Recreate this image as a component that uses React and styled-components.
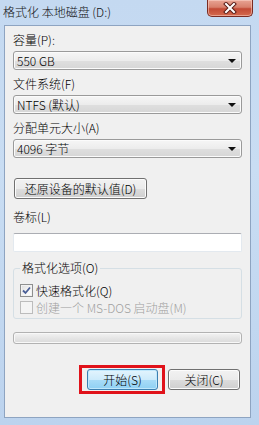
import React from 'react'
import styled, { createGlobalStyle } from 'styled-components'

const Global = createGlobalStyle`
  html, body {
    margin: 0;
    padding: 0;
    width: 259px;
    height: 425px;
    overflow: hidden;
  }
  body {
    font-family: 'Noto Sans CJK SC', 'DejaVu Sans', sans-serif;
    font-size: 12px;
    font-weight: 300;
    color: #000;
  }
`

const Window = styled.div`
  width: 259px;
  height: 425px;
  display: flex;
  flex-direction: column;
  background: linear-gradient(180deg, #c4d9f1 0%, #c9ddf3 40%, #bcd3ee 100%);
  box-sizing: border-box;
`

const TitleBar = styled.div`
  height: 25px;
  flex: none;
  display: flex;
  justify-content: space-between;
  align-items: flex-start;
  padding-left: 3px;
`

const Title = styled.div`
  line-height: 24px;
  font-size: 12px;
  color: #111;
`

const CloseBtn = styled.div`
  width: 46px;
  height: 17px;
  margin-right: 6px;
  box-sizing: border-box;
  border: 1px solid #7a2b22;
  border-top: none;
  border-radius: 0 0 5px 5px;
  background: linear-gradient(180deg, #e8a494 0%, #d8806c 45%, #c24a35 55%, #d46a4e 100%);
  box-shadow: inset 0 0 0 1px rgba(255, 220, 210, 0.5);
  display: flex;
  align-items: center;
  justify-content: center;
`

const Panel = styled.div`
  flex: 1;
  margin: 0 8px 7px 4px;
  background: #f0f0f0;
  border: 1px solid #8ea4c1;
  padding: 6px 8px 0 8px;
  display: flex;
  flex-direction: column;
`

const Label = styled.div`
  line-height: 16px;
  height: 16px;
  margin-top: ${(p) => p.gap || 0}px;
  margin-bottom: ${(p) => (p.below === undefined ? 3 : p.below)}px;
`

const Combo = styled.div`
  height: 19px;
  box-sizing: border-box;
  border: 1px solid #9a9a9a;
  border-radius: 3px;
  background: linear-gradient(180deg, #f6f6f6 0%, #ececec 50%, #dfdfdf 51%, #d6d6d6 100%);
  box-shadow: inset 0 0 0 1px #fbfbfb;
  display: flex;
  align-items: center;
  justify-content: space-between;
  padding: 0 5px 0 3px;
  line-height: 17px;
`

const Arrow = styled.span`
  width: 0;
  height: 0;
  border-left: 4px solid transparent;
  border-right: 4px solid transparent;
  border-top: 4px solid #111;
`

const Button = styled.div`
  height: 21px;
  box-sizing: border-box;
  width: ${(p) => p.w || 73}px;
  border: 1px solid ${(p) => (p.primary ? '#3c7fb1' : '#707070')};
  border-radius: 3px;
  background: ${(p) =>
    p.primary
      ? 'linear-gradient(180deg, #e3f4fd 0%, #cdebfb 50%, #a9dcf8 51%, #8fd0f3 100%)'
      : 'linear-gradient(180deg, #f2f2f2 0%, #ebebeb 50%, #dddddd 51%, #cfcfcf 100%)'};
  box-shadow: inset 0 0 0 1px ${(p) => (p.primary ? '#c0e8fc' : '#fcfcfc')};
  display: flex;
  align-items: center;
  justify-content: center;
  line-height: 19px;
  margin-top: ${(p) => p.gap || 0}px;
  margin-left: ${(p) => p.left || 0}px;
`

const TextInput = styled.div`
  height: 19px;
  box-sizing: border-box;
  background: #fff;
  border: 1px solid #e3e9ef;
  border-top-color: #abadb3;
  border-radius: 2px;
`

const Group = styled.fieldset`
  margin: 8px 0 0 0;
  padding: 0 4px 2px 6px;
  border: 1px solid #d5dfe5;
  border-radius: 3px;
  min-width: 0;
`

const Legend = styled.legend`
  padding: 0 2px;
  line-height: 16px;
  font-size: 12px;
`

const CheckRow = styled.div`
  display: flex;
  align-items: center;
  height: 17px;
  margin-top: ${(p) => p.gap || 0}px;
  color: ${(p) => (p.disabled ? '#a0a0a0' : '#000')};
`

const Box = styled.span`
  width: 13px;
  height: 13px;
  box-sizing: border-box;
  border: 1px solid ${(p) => (p.disabled ? '#bcbcbc' : '#8e8f8f')};
  background: ${(p) =>
    p.disabled ? '#f4f4f4' : 'linear-gradient(135deg, #dcdcdc 0%, #f6f6f6 60%, #ffffff 100%)'};
  box-shadow: inset 0 0 0 1px ${(p) => (p.disabled ? '#f4f4f4' : '#f2f2f2')};
  margin-right: 3px;
  display: flex;
  align-items: center;
  justify-content: center;
`

const Progress = styled.div`
  height: 12px;
  margin-top: 13px;
  box-sizing: border-box;
  border: 1px solid #b2b2b2;
  border-radius: 3px;
  background: linear-gradient(180deg, #f3f3f3 0%, #e6e6e6 50%, #dadada 100%);
  box-shadow: inset 0 0 0 1px #f8f8f8;
`

const Actions = styled.div`
  display: flex;
  justify-content: flex-end;
  align-items: center;
  gap: 3px;
  margin-top: 21px;
  padding-right: 2px;
`

const Highlight = styled.div`
  border: 3px solid #e0121a;
  padding: 1px 4px 1px 5px;
`

const Check = () => (
  <svg width="9" height="9" viewBox="0 0 9 9">
    <path d="M1 4.5 L3.5 7 L8 1.5" fill="none" stroke="#4a5f97" strokeWidth="1.8" />
  </svg>
)

const CloseX = () => (
  <svg width="14" height="12" viewBox="0 0 14 12">
    <path d="M3 2 L11 10 M11 2 L3 10" stroke="#5a1d17" strokeWidth="4" strokeLinecap="square" />
    <path d="M3 2 L11 10 M11 2 L3 10" stroke="#fff" strokeWidth="2" strokeLinecap="square" />
  </svg>
)

export default function App() {
  return (
    <Window>
      <Global />
      <TitleBar>
        <Title>格式化 本地磁盘 (D:)</Title>
        <CloseBtn>
          <CloseX />
        </CloseBtn>
      </TitleBar>
      <Panel>
        <Label>容量(P):</Label>
        <Combo>
          <span>550 GB</span>
          <Arrow />
        </Combo>
        <Label gap={6}>文件系统(F)</Label>
        <Combo>
          <span>NTFS (默认)</span>
          <Arrow />
        </Combo>
        <Label gap={6}>分配单元大小(A)</Label>
        <Combo>
          <span>4096 字节</span>
          <Arrow />
        </Combo>
        <Button w={133} gap={20} left={1}>还原设备的默认值(D)</Button>
        <Label gap={10} below={8}>卷标(L)</Label>
        <TextInput />
        <Group>
          <Legend>格式化选项(O)</Legend>
          <CheckRow gap={6}>
            <Box>
              <Check />
            </Box>
            快速格式化(Q)
          </CheckRow>
          <CheckRow disabled>
            <Box disabled />
            创建一个 MS-DOS 启动盘(M)
          </CheckRow>
        </Group>
        <Progress />
        <Actions>
          <Highlight>
            <Button primary w={71}>开始(S)</Button>
          </Highlight>
          <Button w={72}>关闭(C)</Button>
        </Actions>
      </Panel>
    </Window>
  )
}
